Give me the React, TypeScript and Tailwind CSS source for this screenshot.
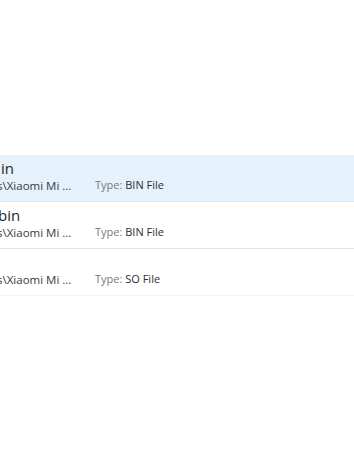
const rows = [
  { name: "in", nameShift: "ml-[1px]", type: "BIN File", selected: true },
  { name: "bin", nameShift: "-ml-[2px]", type: "BIN File", selected: false },
  { name: "", nameShift: "", type: "SO File", selected: false },
];

export default function App() {
  return (
    <div
      className="w-[354px] h-[449px] bg-white overflow-hidden"
      style={{ fontFamily: '"Open Sans", "Noto Sans", sans-serif' }}
    >
      <div className="h-[155px]" />
      {rows.map((r, i) => (
        <div
          key={i}
          className={
            r.selected
              ? "h-[47px] bg-[#e5f1fb] border-b border-[#d6e7f6] overflow-hidden"
              : i === 1
                ? "h-[47px] bg-white border-b border-[#e3e3e3] overflow-hidden"
                : "h-[47px] bg-white border-b border-[#f4f4f4] overflow-hidden"
          }
        >
          <div className="pt-[4px] h-[22px] overflow-hidden">
            <div
              className={`${r.nameShift} text-[15px] leading-[18px] text-[#262626] whitespace-nowrap`}
            >
              {r.name}
            </div>
          </div>
          <div className="flex items-center h-[16px] leading-[16px] whitespace-nowrap">
            <div className="w-[95px] overflow-hidden">
              <span className="-ml-[3px] inline-block text-[11.5px] text-[#3a3a3a]">
                s\Xiaomi Mi ...
              </span>
            </div>
            <span className="text-[11px] text-[#7a7a7a]">Type:&nbsp;</span>
            <span className="text-[11px] text-[#2e2e2e]">{r.type}</span>
          </div>
        </div>
      ))}
    </div>
  );
}
